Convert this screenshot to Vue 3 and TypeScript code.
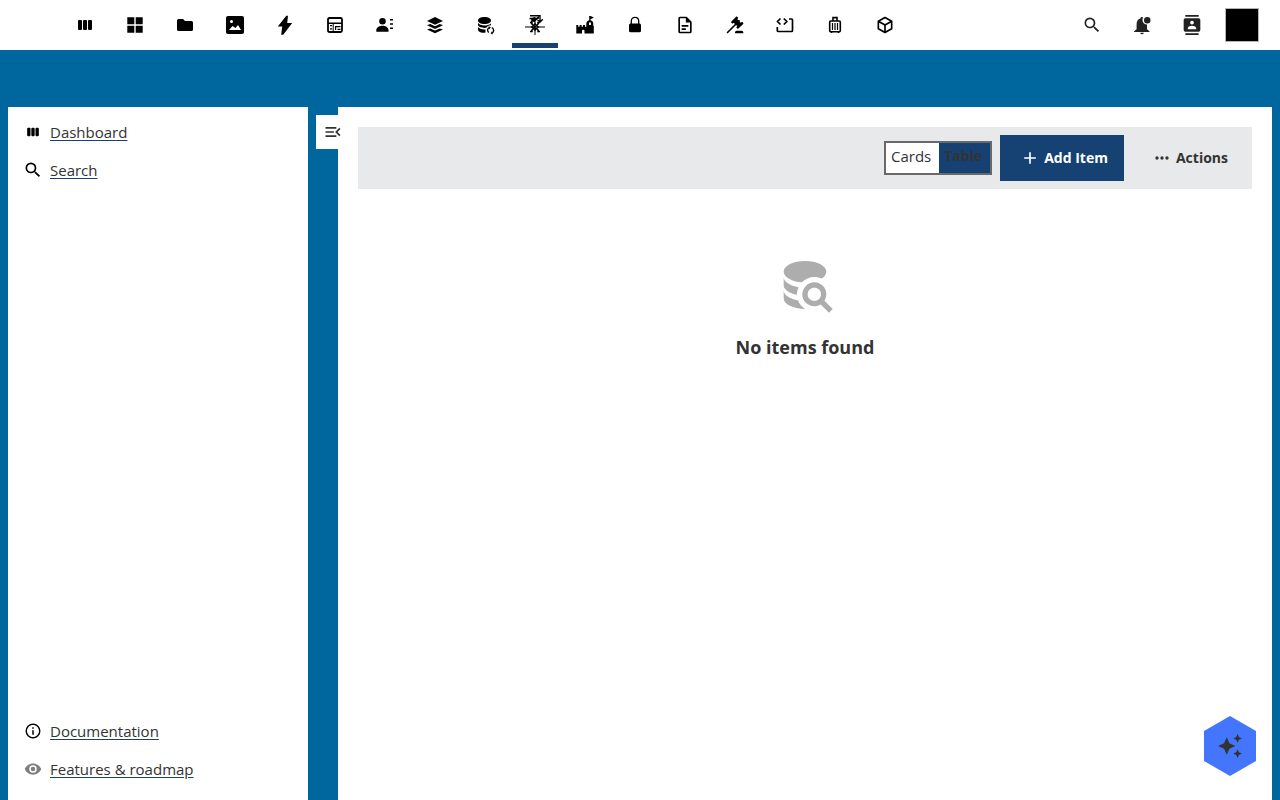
<script setup lang="ts">
import { ref } from 'vue'

interface Shape { d: string; line?: number; evenodd?: boolean }
interface AppEntry { name: string; size: number; shapes: Shape[] }

const magnify = 'M9.5,3A6.5,6.5 0 0,1 16,9.5C16,11.11 15.41,12.59 14.44,13.73L14.71,14H15.5L20.5,19L19,20.5L14,15.5V14.71L13.73,14.44C12.59,15.41 11.11,16 9.5,16A6.5,6.5 0 0,1 3,9.5A6.5,6.5 0 0,1 9.5,3M9.5,5C7,5 5,7 5,9.5C5,12 7,14 9.5,14C12,14 14,12 14,9.5C14,7 12,5 9.5,5Z'
const bars = 'M6,7H8Q9,7 9,8V16Q9,17 8,17H6Q5,17 5,16V8Q5,7 6,7ZM11,7H13Q14,7 14,8V16Q14,17 13,17H11Q10,17 10,16V8Q10,7 11,7ZM16,7H18Q19,7 19,8V16Q19,17 18,17H16Q15,17 15,16V8Q15,7 16,7Z'

const apps: AppEntry[] = [
  { name: 'Dashboard', size: 24, shapes: [{ d: bars }] },
  { name: 'Overview', size: 24, shapes: [{ d: 'M4.3,4.3H11.3V11.3H4.3ZM12.7,4.3H19.7V11.3H12.7ZM4.3,12.7H11.3V19.7H4.3ZM12.7,12.7H19.7V19.7H12.7Z' }] },
  { name: 'Files', size: 24, shapes: [{ d: 'M5.5,6H10L12,8H18.5Q20,8 20,9.5V16.5Q20,18 18.5,18H5.5Q4,18 4,16.5V7.5Q4,6 5.5,6Z' }] },
  { name: 'Photos', size: 24, shapes: [{ d: 'M5,3H19Q21,3 21,5V19Q21,21 19,21H5Q3,21 3,19V5Q3,3 5,3ZM8.5,7A1.5,1.5 0 0,0 8.5,10A1.5,1.5 0 0,0 8.5,7ZM6,17H18L15,12L12.5,15L9.5,13Z', evenodd: true }] },
  { name: 'Activity', size: 24, shapes: [{ d: 'M13.3,2.8L4.8,13.6H9.2L8.2,21.8H10.2L19.2,10H14.2L15,2.8Z' }] },
  { name: 'Tables', size: 24, shapes: [{ d: 'M6.5,5H17.5Q19,5 19,6.5V17.5Q19,19 17.5,19H6.5Q5,19 5,17.5V6.5Q5,5 6.5,5Z', line: 1.8 }, { d: 'M5,9.5H19V11H5ZM9.7,10H10.7V19H9.7ZM7,12H9V13.2H7ZM7,15.3H9V16.5H7ZM12,13H17.5V14.2H13.2V17H12ZM14.5,15.7H17.5V17H14.5Z' }] },
  { name: 'Contacts', size: 24, shapes: [{ d: 'M9.5,5A3.3,3.3 0 0,1 9.5,11.6A3.3,3.3 0 0,1 9.5,5ZM3.3,18.8V17C3.3,14.3 7,12.8 9.5,12.8S15.5,14.3 15.5,17V18.8ZM17,6H20V7.6H17ZM17,10.2H20V11.8H17ZM17,14.4H20V16H17Z' }] },
  { name: 'Registers', size: 24, shapes: [{ d: 'M12,4L20,7.9L12,11.8L4,7.9ZM4,12.2L7.3,11L12,13.2L16.7,11L20,12.2L12,16ZM4,16.6L7.3,15.4L12,17.4L16.7,15.4L20,16.6L12,20.3Z' }] },
  { name: 'Connector', size: 24, shapes: [{ d: 'M11.5,4C15.2,4 18,5.5 18,7.5S15.2,11 11.5,11S5,9.5 5,7.5S7.8,4 11.5,4ZM5,9.7C6,11.4 8.4,12.4 11.5,12.5C13.8,12.5 16.2,12 18,10.5V12.2C15.5,12.3 14.2,13.3 13.4,14.8C9,15.3 5,13.8 5,11.8ZM5,14C6.2,15.8 8.8,16.7 12.5,16.4V19.5C8.8,20.3 5,19 5,16.5Z' }, { d: 'M15.7,19.6C14,17.8 14.3,15.3 16.3,14.7M18.8,14.5C21.2,16 21.2,18.6 19.2,20.1', line: 1.4 }, { d: 'M15.5,13.2L17.8,14.3L16.3,16.6ZM19.7,21.5L17.6,20.4L19,18.2Z' }] },
  { name: 'Catalogue', size: 24, shapes: [{ d: 'M2,14H22M12,9V22', line: 1 }, { d: 'M8.2,10.2L15.8,17.8M15.8,10.2L8.2,17.8M7,9.5H9V11M17,9.5H15V11M7,18.5H9V17M17,18.5H15V17', line: 1.5 }, { d: 'M12,10.5L13.5,12.5L15.5,14L13.5,15.5L12,17.5L10.5,15.5L8.5,14L10.5,12.5Z', line: 1.2 }, { d: 'M7,2.7H17V8.5M6.5,5.5H9M14.5,7L17,9L19.8,6.2M8,8.5L11,7', line: 1.4 }, { d: 'M9.5,4.5L12,4L13,5L16,3V5.5L13.5,7L12,9.5L9,8L8,6.5Z' }] },
  { name: 'Castle', size: 24, shapes: [{ d: 'M3.3,12H5.2V13.8H6.6V12H8.6V13.8H10V12H12V13.8H13.3V11Q13.3,8 16.2,7.2V3H17.5L21,4.5L17.5,6.2V7.2Q20.3,8 20.3,11V13H20.8V20.5H11.5V18Q11.5,16.7 10.2,16.7T9,18V20.5H3.3ZM17,9.3Q16,9.3 16,10.5V12H18V10.5Q18,9.3 17,9.3Z', evenodd: true }] },
  { name: 'Passwords', size: 24, shapes: [{ d: 'M7.5,10.5H16.5Q18,10.5 18,12.3V17.7Q18,19.3 16.3,19.3H7.7Q6,19.3 6,17.7V12.3Q6,10.5 7.5,10.5Z' }, { d: 'M8.3,12V8C8.3,3.2 15.7,3.2 15.7,8V12', line: 1.3 }] },
  { name: 'Documents', size: 20, shapes: [{ d: 'M6,2A2,2 0 0,0 4,4V20A2,2 0 0,0 6,22H18A2,2 0 0,0 20,20V8L14,2H6M6,4H13V9H18V20H6V4M8,12V14H16V12H8M8,16V18H13V16H8Z' }] },
  { name: 'Decisions', size: 20, shapes: [{ d: 'M2.3,20.28L11.9,10.68L10.5,9.26L9.78,9.97C9.39,10.36 8.76,10.36 8.37,9.97L7.66,9.26C7.27,8.87 7.27,8.24 7.66,7.85L13.32,2.19C13.71,1.8 14.34,1.8 14.73,2.19L15.44,2.9C15.83,3.29 15.83,3.92 15.44,4.31L14.73,5L16.15,6.43C16.54,6.04 17.17,6.04 17.56,6.43C17.95,6.82 17.95,7.46 17.56,7.85L18.97,9.26L19.68,8.55C20.07,8.16 20.71,8.16 21.1,8.55L21.8,9.26C22.19,9.65 22.19,10.29 21.8,10.68L16.15,16.33C15.76,16.72 15.12,16.72 14.73,16.33L14.03,15.63C13.63,15.24 13.63,14.6 14.03,14.21L14.73,13.5L13.32,12.09L3.72,21.7C3.33,22.09 2.69,22.09 2.3,21.7C1.91,21.31 1.91,20.67 2.3,20.28M20,19A2,2 0 0,1 22,21V22H12V21A2,2 0 0,1 14,19H20Z' }] },
  { name: 'Code', size: 24, shapes: [{ d: 'M7.5,5.5L4.5,8.5L7.5,11.5M10.8,5.5L13.8,8.5L10.8,11.5M16,6H18.5Q19.5,6 19.5,7V17.5Q19.5,18.5 18.5,18.5H5.3Q4.3,18.5 4.3,17.5V14', line: 1.7 }] },
  { name: 'Travel', size: 24, shapes: [{ d: 'M7.7,8H16.3Q17.3,8 17.3,9V17.7Q17.3,18.7 16.3,18.7H7.7Q6.7,18.7 6.7,17.7V9Q6.7,8 7.7,8ZM10,8V4.6H14V8M8.5,18.7V20M15.5,18.7V20', line: 1.6 }, { d: 'M9.5,10V17M12,10V17M14.5,10V17', line: 1.2 }] },
  { name: 'Packages', size: 20, shapes: [{ d: 'M21,16.5C21,16.88 20.79,17.21 20.47,17.38L12.57,21.82C12.41,21.94 12.21,22 12,22C11.79,22 11.59,21.94 11.43,21.82L3.53,17.38C3.21,17.21 3,16.88 3,16.5V7.5C3,7.12 3.21,6.79 3.53,6.62L11.43,2.18C11.59,2.06 11.79,2 12,2C12.21,2 12.41,2.06 12.57,2.18L20.47,6.62C20.79,6.79 21,7.12 21,7.5V16.5M12,4.15L6.04,7.5L12,10.85L17.96,7.5L12,4.15M5,15.91L11,19.29V12.58L5,9.21V15.91M19,15.91V9.21L13,12.58V19.29L19,15.91Z' }] },
]

const tools = [
  { name: 'Unified search', d: magnify },
  { name: 'Notifications', d: 'M12,2.5C12.5,2.5 13,2.8 13.3,3.2C12.8,4 12.5,5 12.5,6C12.5,9 15,11.4 18,11.5V17L21,19.5V20.5H2.5V19.5L5.5,17V11C5.5,7.5 7,5 10,4.2C10,3.2 11,2.5 12,2.5ZM9.8,21.3H14.2Q13.8,23.2 12,23.2T9.8,21.3ZM18.3,2.3A3.9,3.9 0 0,1 18.3,10.1A3.9,3.9 0 0,1 18.3,2.3Z' },
  { name: 'Search contacts', d: 'M20,0H4V2H20V0M4,24H20V22H4V24M20,4H4A2,2 0 0,0 2,6V18A2,2 0 0,0 4,20H20A2,2 0 0,0 22,18V6A2,2 0 0,0 20,4M12,6.75A2.25,2.25 0 0,1 14.25,9A2.25,2.25 0 0,1 12,11.25A2.25,2.25 0 0,1 9.75,9A2.25,2.25 0 0,1 12,6.75M17,17H7V15.5C7,13.83 10.33,13 12,13C13.67,13 17,13.83 17,15.5V17Z' },
]

const mainLinks = [
  { label: 'Dashboard', size: 20, tone: 'black', d: bars },
  { label: 'Search', size: 20, tone: 'black', d: magnify },
]
const footerLinks = [
  { label: 'Documentation', size: 18, tone: 'black', d: 'M11,9H13V7H11M12,20C7.59,20 4,16.41 4,12C4,7.59 7.59,4 12,4C16.41,4 20,7.59 20,12C20,16.41 16.41,20 12,20M12,2A10,10 0 0,0 2,12A10,10 0 0,0 12,22A10,10 0 0,0 22,12A10,10 0 0,0 12,2M11,17H13V11H11V17Z' },
  { label: 'Features & roadmap', size: 18, tone: 'grey', d: 'M12,9A3,3 0 0,0 9,12A3,3 0 0,0 12,15A3,3 0 0,0 15,12A3,3 0 0,0 12,9M12,17A5,5 0 0,1 7,12A5,5 0 0,1 12,7A5,5 0 0,1 17,12A5,5 0 0,1 12,17M12,4.5C7,4.5 2.73,7.61 1,12C2.73,16.39 7,19.5 12,19.5C17,19.5 21.27,16.39 23,12C21.27,7.61 17,4.5 12,4.5Z' },
]
const linkGroups = [mainLinks, footerLinks]

const active = ref('Catalogue')
const view = ref('Table')
</script>

<template>
  <div class="page">
    <header class="topbar">
      <nav class="apps" aria-label="Applications">
        <a
          v-for="app in apps"
          :key="app.name"
          href="#"
          class="app"
          :class="{ active: app.name === active }"
          :aria-label="app.name"
          @click.prevent="active = app.name"
        >
          <svg :width="app.size" :height="app.size" viewBox="0 0 24 24" aria-hidden="true">
            <path
              v-for="(shape, i) in app.shapes"
              :key="i"
              :d="shape.d"
              :fill="shape.line ? 'none' : 'currentColor'"
              :fill-rule="shape.evenodd ? 'evenodd' : 'nonzero'"
              :stroke="shape.line ? 'currentColor' : 'none'"
              :stroke-width="shape.line"
            />
          </svg>
        </a>
      </nav>
      <div class="tools">
        <button v-for="tool in tools" :key="tool.name" type="button" class="tool" :aria-label="tool.name">
          <svg width="20" height="20" viewBox="0 0 24 24" aria-hidden="true"><path :d="tool.d" /></svg>
        </button>
        <button type="button" class="tool" aria-label="Settings menu"><span class="avatar"></span></button>
      </div>
    </header>

    <div class="content">
      <nav class="sidebar" aria-label="Catalogue">
        <ul v-for="(group, g) in linkGroups" :key="g" class="links">
          <li v-for="link in group" :key="link.label">
            <a href="#" class="link">
              <span class="link-icon" :class="link.tone">
                <svg :width="link.size" :height="link.size" viewBox="0 0 24 24" aria-hidden="true"><path :d="link.d" /></svg>
              </span>
              <span class="link-label">{{ link.label }}</span>
            </a>
          </li>
        </ul>
      </nav>

      <main class="panel">
        <button type="button" class="collapse" aria-label="Close navigation">
          <svg width="20" height="20" viewBox="0 0 24 24" aria-hidden="true"><path d="M21,15.61L19.59,17L14.58,12L19.59,7L21,8.39L17.44,12L21,15.61M3,6H16V8H3V6M3,13V11H13V13H3M3,18V16H16V18H3Z" /></svg>
        </button>
        <div class="toolbar">
          <div class="switch" role="radiogroup" aria-label="View">
            <label v-for="mode in ['Cards', 'Table']" :key="mode" class="mode" :class="{ chosen: view === mode }">
              <input v-model="view" type="radio" name="view" :value="mode">
              <span>{{ mode }}</span>
            </label>
          </div>
          <button type="button" class="button primary">
            <svg width="20" height="20" viewBox="0 0 24 24" aria-hidden="true"><path d="M19,13H13V19H11V13H5V11H11V5H13V11H19V13Z" /></svg>
            <span>Add Item</span>
          </button>
          <button type="button" class="button">
            <svg width="20" height="20" viewBox="0 0 24 24" aria-hidden="true"><path d="M16,12A2,2 0 0,1 18,10A2,2 0 0,1 20,12A2,2 0 0,1 18,14A2,2 0 0,1 16,12M10,12A2,2 0 0,1 12,10A2,2 0 0,1 14,12A2,2 0 0,1 12,14A2,2 0 0,1 10,12M4,12A2,2 0 0,1 6,10A2,2 0 0,1 8,12A2,2 0 0,1 6,14A2,2 0 0,1 4,12Z" /></svg>
            <span>Actions</span>
          </button>
        </div>
        <div class="empty">
          <svg class="empty-icon" width="64" height="64" viewBox="0 0 24 24" aria-hidden="true"><path d="M18.68,12.32C16.92,10.56 14.07,10.57 12.32,12.33C10.56,14.09 10.56,16.94 12.32,18.69C13.81,20.17 16.11,20.43 17.89,19.32L21,22.39L22.39,21L19.3,17.89C20.43,16.12 20.17,13.8 18.68,12.32M17.27,17.27C16.29,18.25 14.71,18.24 13.73,17.27C12.76,16.29 12.76,14.71 13.74,13.73C14.71,12.76 16.29,12.76 17.27,13.73C18.24,14.71 18.24,16.29 17.27,17.27M10.9,20.1C10.25,19.44 9.74,18.65 9.42,17.78C6.27,17.25 4,15.76 4,14V17C4,19.21 7.58,21 12,21V21C11.6,20.74 11.23,20.44 10.9,20.1M4,9V12C4,13.68 6.07,15.12 9,15.7C9,15.63 9,15.57 9,15.5C9,14.57 9.2,13.65 9.58,12.81C6.34,12.3 4,10.79 4,9M12,3C7.58,3 4,4.79 4,7C4,9 7,10.68 10.85,11H10.9C12.1,9.74 13.76,9 15.5,9C16.41,9 17.31,9.19 18.14,9.56C19.17,9.09 19.87,8.12 20,7C20,4.79 16.42,3 12,3Z" /></svg>
          <h2>No items found</h2>
        </div>
      </main>
    </div>

    <button type="button" class="assistant" aria-label="Assistant">
      <svg width="26" height="26" viewBox="0 0 24 24" aria-hidden="true"><path d="M19,1L17.74,3.75L15,5L17.74,6.26L19,9L20.25,6.26L23,5L20.25,3.75M9,4L6.5,9.5L1,12L6.5,14.5L9,20L11.5,14.5L17,12L11.5,9.5M19,15L17.74,17.74L15,19L17.74,20.25L19,23L20.25,20.25L23,19L20.25,17.74" /></svg>
    </button>
  </div>
</template>

<style>
body {
  margin: 0;
  background: #00679e;
}
</style>

<style scoped>
.page {
  box-sizing: border-box;
  display: flex;
  flex-direction: column;
  min-height: 100vh;
  background: #00679e;
  color: #333;
  font: 15px/22px "Open Sans", "Noto Sans", sans-serif;
}
.page * {
  box-sizing: border-box;
}
button {
  margin: 0;
  padding: 0;
  border: 0;
  background: none;
  color: inherit;
  font: inherit;
  cursor: pointer;
}
svg {
  display: block;
  flex: none;
  fill: currentColor;
}
.topbar {
  display: flex;
  justify-content: space-between;
  height: 50px;
  padding: 0 13px 0 60px;
  background: #fff;
}
.apps,
.tools {
  display: flex;
}
.app,
.tool {
  display: flex;
  align-items: center;
  justify-content: center;
  width: 50px;
  height: 50px;
}
.app {
  position: relative;
  color: #000;
}
.app.active::after {
  content: "";
  position: absolute;
  right: 2px;
  bottom: 2px;
  left: 2px;
  height: 5px;
  background: #154273;
}
.tool {
  color: #222;
}
.avatar {
  width: 34px;
  height: 34px;
  border: 1px solid #b5b5b5;
  background: #000;
}
.content {
  display: flex;
  flex: 1;
  gap: 30px;
  padding: 57px 8px 0;
}
.sidebar {
  display: flex;
  flex: none;
  flex-direction: column;
  justify-content: space-between;
  width: 300px;
  padding: 8px 8px 14px;
  background: #fff;
}
.links {
  display: flex;
  flex-direction: column;
  gap: 4px;
  margin: 0;
  padding: 0;
  list-style: none;
}
.link {
  display: flex;
  align-items: center;
  height: 34px;
  color: #333;
  text-decoration: none;
}
.link-icon {
  display: flex;
  justify-content: center;
  width: 34px;
}
.black {
  color: #000;
}
.grey {
  color: #7f7f7f;
}
.link-label {
  text-decoration: underline #154273;
  text-underline-offset: 2px;
}
.panel {
  position: relative;
  flex: 1;
  min-width: 0;
  padding: 20px;
  background: #fff;
}
.collapse {
  position: absolute;
  top: 8px;
  left: -22px;
  display: flex;
  align-items: center;
  justify-content: center;
  width: 34px;
  height: 34px;
  background: #fff;
}
.toolbar {
  display: flex;
  align-items: center;
  justify-content: flex-end;
  gap: 8px;
  padding: 8px;
  background: #e7e9eb;
}
.switch {
  display: flex;
  height: 34px;
  border: 2px solid #696969;
  background: #fff;
}
.mode {
  position: relative;
  display: flex;
  padding: 2px 8px 0 5px;
  cursor: pointer;
}
.mode input {
  position: absolute;
  inset: 0;
  width: 100%;
  height: 100%;
  margin: 0;
  opacity: 0;
}
.chosen {
  background: #154273;
  font-size: 14px;
  font-weight: 700;
}
.button {
  display: flex;
  align-items: center;
  justify-content: center;
  gap: 4px;
  height: 46px;
  padding: 0 16px 0 20px;
  font-size: 14px;
  font-weight: 700;
}
.primary {
  background: #154273;
  color: #fff;
}
.empty {
  display: flex;
  flex-direction: column;
  align-items: center;
  padding-top: 64px;
}
.empty-icon {
  color: #adadad;
}
h2 {
  margin: 15px 0 0;
  font-size: 18px;
  line-height: 30px;
}
.assistant {
  position: fixed;
  right: 24px;
  bottom: 24px;
  display: flex;
  align-items: center;
  justify-content: center;
  width: 52px;
  height: 60px;
  background: #4376fc;
  clip-path: polygon(50% 0, 100% 25%, 100% 75%, 50% 100%, 0 75%, 0 25%);
}
</style>
